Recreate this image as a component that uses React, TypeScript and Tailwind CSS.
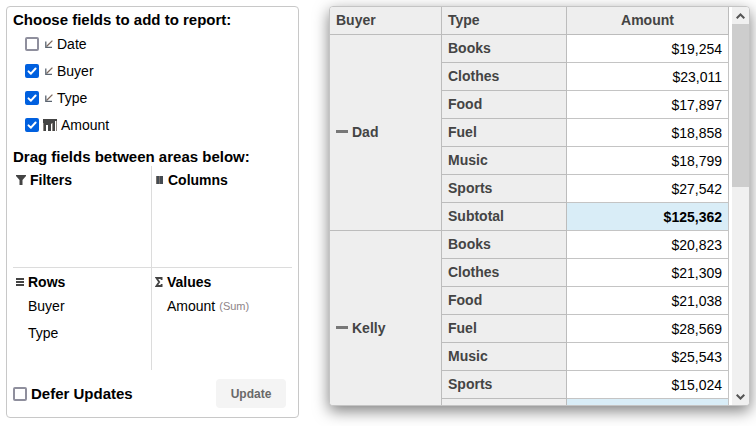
import type { ReactNode } from "react";

type Field = { name: string; checked: boolean; measure?: boolean };

const fields: Field[] = [
  { name: "Date", checked: false },
  { name: "Buyer", checked: true },
  { name: "Type", checked: true },
  { name: "Amount", checked: true, measure: true },
];

const groups = [
  {
    buyer: "Dad",
    subtotal: "$125,362",
    rows: [
      ["Books", "$19,254"],
      ["Clothes", "$23,011"],
      ["Food", "$17,897"],
      ["Fuel", "$18,858"],
      ["Music", "$18,799"],
      ["Sports", "$27,542"],
    ],
  },
  {
    buyer: "Kelly",
    subtotal: null,
    rows: [
      ["Books", "$20,823"],
      ["Clothes", "$21,309"],
      ["Food", "$21,038"],
      ["Fuel", "$28,569"],
      ["Music", "$25,543"],
      ["Sports", "$15,024"],
    ],
  },
];

function Checkbox({ id, checked = false }: { id: string; checked?: boolean }) {
  return (
    <span className="grid size-3.5 shrink-0">
      <input
        id={id}
        type="checkbox"
        defaultChecked={checked}
        className="peer col-start-1 row-start-1 size-3.5 appearance-none rounded-xs border-2 border-[#8f8f9d] bg-white checked:border-[#0060df] checked:bg-[#0060df]"
      />
      <svg
        viewBox="0 0 14 14"
        className="pointer-events-none invisible col-start-1 row-start-1 size-3.5 peer-checked:visible"
        fill="none"
        stroke="#fff"
        strokeWidth="2"
        strokeLinecap="round"
        strokeLinejoin="round"
      >
        <path d="M3.5 7.4 L5.9 9.7 L10.6 4.5" />
      </svg>
    </span>
  );
}

function DimensionIcon() {
  return (
    <svg viewBox="0 0 8 8" className="mt-px mr-1 ml-1.5 size-2 shrink-0" fill="none">
      <path d="M7.4 0.6 L1.5 6.5" stroke="#7d6a60" strokeWidth="1.3" />
      <path d="M0.8 1.5 V7.3 H7" stroke="#5a6470" strokeWidth="1.3" />
    </svg>
  );
}

function MeasureIcon() {
  return (
    <svg viewBox="0 0 14 12" className="mr-1 ml-1 h-3 w-3.5 shrink-0" shapeRendering="crispEdges">
      <path d="M0 0H14V12H13V2H10V12H9V5H6V12H5V3H1V12H0Z" fill="#8b8580" />
      <path d="M0 0H14V2H12V12H10V4H8V12H5V6H3V12H1V4H0Z" fill="#444" />
    </svg>
  );
}

function Area({ title, icon, className, children }: { title: string; icon: ReactNode; className: string; children?: ReactNode }) {
  return (
    <section className={className}>
      <h3 className="flex h-7 items-center text-[14px] font-bold">
        {icon}
        {title}
      </h3>
      {children}
    </section>
  );
}

function FieldPanel() {
  return (
    <div className="flex w-[293px] shrink-0 flex-col rounded border border-[#c8c8c8] px-1.5 pt-1 pb-[9px]">
      <h2 className="text-[15px]/[18px] font-bold">Choose fields to add to report:</h2>
      <ul className="mt-px ml-3">
        {fields.map((f) => (
          <li key={f.name} className="flex h-[27px] items-center">
            <Checkbox id={f.name} checked={f.checked} />
            <label htmlFor={f.name} className="flex items-center">
              {f.measure ? <MeasureIcon /> : <DimensionIcon />}
              {f.name}
            </label>
          </li>
        ))}
      </ul>
      <h2 className="mt-2.5 text-[15px]/[18px] font-bold">Drag fields between areas below:</h2>
      <div className="grid grid-cols-[139px_1fr] grid-rows-[102px_102px]">
        <Area
          title="Filters"
          className="border-r border-b border-[#dcdcdc]"
          icon={
            <svg viewBox="0 0 10 10" className="mr-1 ml-[3px] size-2.5" fill="#444">
              <path d="M0 0H10V1L6.5 5V10H3.5V5L0 1Z" />
            </svg>
          }
        />
        <Area
          title="Columns"
          className="border-b border-[#dcdcdc]"
          icon={
            <svg viewBox="0 0 8 8" className="mr-1 ml-1 size-2" shapeRendering="crispEdges">
              <path d="M1 0H7V8H1Z" fill="#444b52" />
              <path d="M0 0H1V8H0ZM3 0H4V8H3Z" fill="#77706a" />
            </svg>
          }
        />
        <Area
          title="Rows"
          className="border-r border-[#dcdcdc]"
          icon={
            <svg viewBox="0 0 8 8" className="mr-1 ml-[3px] size-2" fill="#444" shapeRendering="crispEdges">
              <path d="M0 0H8V2H0ZM0 3H8V5H0ZM0 6H8V8H0Z" />
            </svg>
          }
        >
          <ul className="ml-[15px]">
            <li className="-mt-1 flex h-[27px] items-center">Buyer</li>
            <li className="flex h-[27px] items-center">Type</li>
          </ul>
        </Area>
        <Area
          title="Values"
          className=""
          icon={
            <svg viewBox="0 0 8 10" className="mr-1 ml-[3px] h-2.5 w-2" fill="none" stroke="#444" strokeWidth="1.8">
              <path d="M6.6 3V1H1.5L4.2 5L1.5 9H6.6V7" />
            </svg>
          }
        >
          <ul className="ml-[15px]">
            <li className="-mt-1 flex h-[27px] items-center gap-1">
              Amount <span className="text-[11px] text-[#8e8488]">(Sum)</span>
            </li>
          </ul>
        </Area>
      </div>
      <div className="mt-[9px] flex items-center pr-1.5">
        <Checkbox id="defer" />
        <label htmlFor="defer" className="ml-1 text-[15px] font-bold">
          Defer Updates
        </label>
        <button type="button" className="ml-auto h-[29px] w-[70px] rounded bg-[#f4f4f4] text-[12px] font-bold text-[#696969]">
          Update
        </button>
      </div>
    </div>
  );
}

const head = "border-r border-b border-[#bcbcbc] bg-[#eee] px-1.5 pb-0.5 font-bold text-[#444]";
const cell = "h-7 border-r border-b border-[#c4c4c4] px-1.5 pt-px text-right";

function Pivot() {
  return (
    <div className="flex h-[400px] min-w-0 flex-1 overflow-hidden rounded border border-[#c4c4c4] bg-white shadow-[0_5px_15px_rgba(0,0,0,0.5)]">
      <div className="min-w-0 flex-1 overflow-hidden">
        <table className="w-full table-fixed border-separate border-spacing-0 text-left">
          <colgroup>
            <col className="w-[112px]" />
            <col className="w-[125px]" />
            <col />
          </colgroup>
          <thead>
            <tr className="h-7">
              <th className={head}>Buyer</th>
              <th className={head}>Type</th>
              <th className={`${head} text-center`}>Amount</th>
            </tr>
          </thead>
          {groups.map((g) => (
            <tbody key={g.buyer}>
              {g.rows.map(([type, amount], i) => (
                <tr key={type} className="h-7">
                  {i === 0 && (
                    <th rowSpan={7} className={head}>
                      <button type="button" className="flex items-center gap-1 font-bold">
                        <span className="h-[3px] w-3 bg-[#777]" />
                        {g.buyer}
                      </button>
                    </th>
                  )}
                  <th className={head}>{type}</th>
                  <td className={cell}>{amount}</td>
                </tr>
              ))}
              <tr className="h-7">
                <th className={head}>{g.subtotal && "Subtotal"}</th>
                <td className={`${cell} bg-[#d9edf7] font-bold`}>{g.subtotal}</td>
              </tr>
            </tbody>
          ))}
        </table>
      </div>
      <div className="ml-[3px] flex w-[17px] shrink-0 flex-col bg-[#f0f0f0]">
        <button type="button" aria-label="Scroll up" className="flex h-[17px] items-center justify-center">
          <svg viewBox="0 0 9 6" className="h-1.5 w-[9px]" fill="none" stroke="#555" strokeWidth="2">
            <path d="M0.7 5.3 L4.5 1.5 L8.3 5.3" />
          </svg>
        </button>
        <div className="h-[163px] bg-[#cdcdcd]" />
        <button type="button" aria-label="Scroll down" className="mt-auto flex h-[17px] items-center justify-center">
          <svg viewBox="0 0 9 6" className="h-1.5 w-[9px]" fill="none" stroke="#555" strokeWidth="2">
            <path d="M0.7 0.7 L4.5 4.5 L8.3 0.7" />
          </svg>
        </button>
      </div>
    </div>
  );
}

export default function App() {
  return (
    <main className="flex items-start gap-[30px] overflow-hidden bg-white p-1.5 pb-5 font-['Liberation_Sans',Arial,sans-serif] text-[14px]/[18px] text-black">
      <FieldPanel />
      <Pivot />
    </main>
  );
}
